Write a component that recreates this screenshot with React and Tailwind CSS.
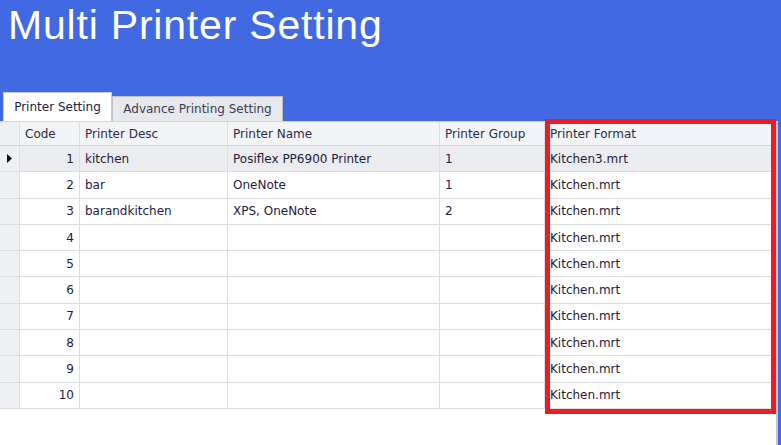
import React from "react";

const rows = [
  { code: 1, desc: "kitchen", name: "Posiflex PP6900 Printer", group: "1", format: "Kitchen3.mrt" },
  { code: 2, desc: "bar", name: "OneNote", group: "1", format: "Kitchen.mrt" },
  { code: 3, desc: "barandkitchen", name: "XPS, OneNote", group: "2", format: "Kitchen.mrt" },
  { code: 4, desc: "", name: "", group: "", format: "Kitchen.mrt" },
  { code: 5, desc: "", name: "", group: "", format: "Kitchen.mrt" },
  { code: 6, desc: "", name: "", group: "", format: "Kitchen.mrt" },
  { code: 7, desc: "", name: "", group: "", format: "Kitchen.mrt" },
  { code: 8, desc: "", name: "", group: "", format: "Kitchen.mrt" },
  { code: 9, desc: "", name: "", group: "", format: "Kitchen.mrt" },
  { code: 10, desc: "", name: "", group: "", format: "Kitchen.mrt" },
];

const App = () => {
  return (
    <div
      className="w-[781px] h-[445px] bg-[#4169e1] overflow-hidden flex flex-col"
      style={{ fontFamily: "Tahoma, 'DejaVu Sans', sans-serif" }}
    >
      {/* Title */}
      <div className="h-[92px] pl-[8px] pt-[1px]">
        <h1
          className="text-white text-[41px] leading-[48px] tracking-[0.8px]"
          style={{ fontFamily: "'Liberation Sans', Arial, sans-serif" }}
        >
          Multi Printer Setting
        </h1>
      </div>

      {/* Tabs */}
      <div className="flex items-end h-[29px] pl-[3px] text-[12px] text-[#1e2040]">
        <div className="h-[29px] w-[109px] bg-white border border-[#c8c9ce] border-b-0 flex items-center justify-center">
          Printer Setting
        </div>
        <div className="h-[25px] w-[171px] bg-[#e7e8eb] border border-[#bfc0c5] border-b-0 flex items-center justify-center text-[#3a3c55]">
          Advance Printing Setting
        </div>
      </div>

      {/* Grid panel */}
      <div className="relative w-[778px] flex-1 bg-white border-r-2 border-[#c4c5ca] text-[12px] text-[#1e2040]">
        {/* Header */}
        <div className="flex h-[25px] bg-[#f3f4f6] border-b border-[#d4d5db] border-t border-t-[#d4d5db] text-[#2a2c48]">
          <div className="w-[20px] border-r border-[#dcdde2] bg-[#eef0f3]" />
          <div className="w-[60px] border-r border-[#dcdde2] px-[5px] flex items-center">Code</div>
          <div className="w-[148px] border-r border-[#dcdde2] px-[5px] flex items-center">Printer Desc</div>
          <div className="w-[212px] border-r border-[#dcdde2] px-[5px] flex items-center">Printer Name</div>
          <div className="w-[105px] border-r border-[#dcdde2] px-[5px] flex items-center">Printer Group</div>
          <div className="w-[231px] px-[5px] flex items-center">Printer Format</div>
        </div>

        {/* Rows */}
        {rows.map((r, i) => (
          <div
            key={r.code}
            className={`flex h-[26.3px] border-b border-[#dcdde2] ${i === 0 ? "bg-[#ebecef]" : "bg-white"}`}
          >
            <div className="w-[20px] border-r border-[#dcdde2] bg-[#eef0f3] flex items-center justify-center">
              {i === 0 && (
                <svg width="5" height="9" viewBox="0 0 5 9">
                  <path d="M0 0 L5 4.5 L0 9 Z" fill="#111" />
                </svg>
              )}
            </div>
            <div className="w-[60px] border-r border-[#dcdde2] px-[5px] flex items-center justify-end">{r.code}</div>
            <div className="w-[148px] border-r border-[#dcdde2] px-[5px] flex items-center">{r.desc}</div>
            <div className="w-[212px] border-r border-[#dcdde2] px-[5px] flex items-center">{r.name}</div>
            <div className="w-[105px] border-r border-[#dcdde2] px-[5px] flex items-center">{r.group}</div>
            <div className="w-[231px] px-[5px] flex items-center">{r.format}</div>
          </div>
        ))}

        {/* Highlight annotation */}
        <div className="absolute left-[545px] top-[-2px] w-[231px] h-[295px] border-[5px] border-[#ec1c24] pointer-events-none" />
      </div>
    </div>
  );
};

export default App;
